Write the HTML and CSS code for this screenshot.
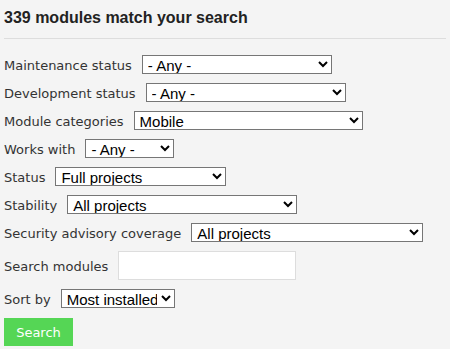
FILE: index.html
```html
<!DOCTYPE html>
<html lang="en">
<head>
    <meta charset="UTF-8">
    <title>Search modules</title>
    <link rel="stylesheet" href="styles.css">
</head>
<body>
    <div class="results-header">
        <h2>339 modules match your search</h2>
    </div>
    <form class="search-form">
        <div class="form-row">
            <label>Maintenance status</label>
            <select class="w-maint"><option>- Any -</option></select>
        </div>
        <div class="form-row">
            <label>Development status</label>
            <select class="w-dev"><option>- Any -</option></select>
        </div>
        <div class="form-row">
            <label>Module categories</label>
            <select class="w-cat"><option>Mobile</option></select>
        </div>
        <div class="form-row">
            <label>Works with</label>
            <select class="w-works"><option>- Any -</option></select>
        </div>
        <div class="form-row">
            <label>Status</label>
            <select class="w-status"><option>Full projects</option></select>
        </div>
        <div class="form-row">
            <label>Stability</label>
            <select class="w-stab"><option>All projects</option></select>
        </div>
        <div class="form-row">
            <label>Security advisory coverage</label>
            <select class="w-sec"><option>All projects</option></select>
        </div>
        <div class="form-row">
            <label>Search modules</label>
            <input type="text" class="text-input">
        </div>
        <div class="form-row">
            <label>Sort by</label>
            <select class="w-sort"><option>Most installed</option></select>
        </div>
        <button type="button" class="search-btn">Search</button>
    </form>
</body>
</html>
```

FILE: styles.css
```css
body {
    margin: 0;
    padding: 0 4px;
    background-color: #f4f4f4;
    color: #333;
    font-family: "DejaVu Sans", sans-serif;
    font-size: 13px;
}

.results-header {
    border-bottom: 1px solid #ddd;
    padding: 8px 0 10px;
}

.results-header h2 {
    margin: 0;
    font-family: "Liberation Sans", Arial, sans-serif;
    font-size: 16px;
    font-weight: bold;
    color: #222;
    line-height: 20px;
}

.search-form {
    padding-top: 16px;
}

.form-row {
    display: flex;
    align-items: center;
    margin-bottom: 9px;
}

.form-row label {
    margin-right: 10px;
    padding-top: 2px;
}

.form-row select {
    height: 19px;
    font-family: "Liberation Sans", Arial, sans-serif;
    font-size: 15px;
    color: #000;
    background-color: #fff;
    border: 1px solid #767676;
    border-radius: 0;
    padding: 0 1px;
}

.w-maint { width: 190px; }
.w-dev { width: 200px; }
.w-cat { width: 229px; }
.w-works { width: 89px; }
.w-status { width: 171px; }
.w-stab { width: 230px; }
.w-sec { width: 232px; }
.w-sort { width: 114px; }

.text-input {
    width: 178px;
    height: 29px;
    box-sizing: border-box;
    border: 1px solid #ddd;
    background-color: #fff;
}

.search-btn {
    margin-top: 1px;
    width: 69px;
    height: 28px;
    border: none;
    background-color: #55d655;
    color: #fff;
    font-family: "DejaVu Sans", sans-serif;
    font-size: 13px;
}
```
